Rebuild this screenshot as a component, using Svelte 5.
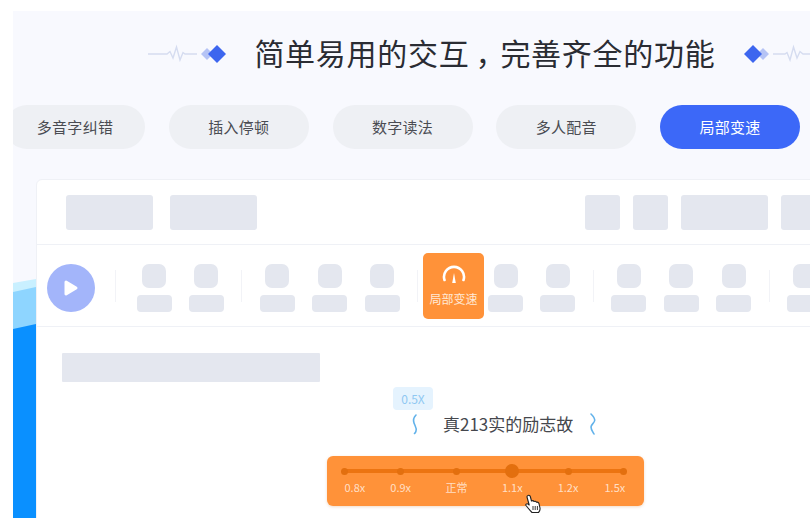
<script lang="ts">
	const tabs = ['多音字纠错', '插入停顿', '数字读法', '多人配音', '局部变速'];
	const groups = [2, 3, 3, 3, 1];
	const speeds = [
		{ label: '0.8x', cls: 'first' },
		{ label: '0.9x' },
		{ label: '正常' },
		{ label: '1.1x', active: true },
		{ label: '1.2x' },
		{ label: '1.5x', cls: 'last' }
	];
</script>

{#snippet ornament(flip: boolean)}
	<svg class="ornament" class:flip width="78" height="24" viewBox="0 0 78 24" fill="none">
		<path d="M0 12H19L22 9.500L25 16L28.500 5L32 18L35 10.500L37 12H49" stroke="#d5dcf0" stroke-width="1.400" />
		<path d="M59 6L65 12L59 18L53 12Z" fill="#b5c3f5" />
		<path d="M69 3L78 12L69 21L60 12Z" fill="#3d66ef" />
	</svg>
{/snippet}

<div class="page">
	<div class="panel">
		<svg class="wave" width="23" height="250" viewBox="0 0 23 250">
			<path d="M0 15L23 11V250H0Z" fill="#c9f0ff" />
			<path d="M0 24L23 19V250H0Z" fill="#8ed5ff" />
			<path d="M0 61L23 56V250H0Z" fill="#0a90ff" />
		</svg>

		<div class="title-row">
			{@render ornament(false)}
			<h1>简单易用的交互<span class="comma">，</span>完善齐全的功能</h1>
			{@render ornament(true)}
		</div>

		<div class="tabs">
			{#each tabs as tab, i}
				<div class="tab" class:active={i === tabs.length - 1}>{tab}</div>
			{/each}
		</div>

		<div class="card">
			<div class="toolbar">
				<div class="ph wide"></div>
				<div class="ph wide"></div>
				<div class="spacer"></div>
				<div class="ph small"></div>
				<div class="ph small"></div>
				<div class="ph wide"></div>
				<div class="ph small"></div>
			</div>

			<div class="tools">
				<div class="play">
					<svg width="16" height="18" viewBox="0 0 16 18">
						<path d="M3 3L13 9L3 15Z" fill="#fff" stroke="#fff" stroke-width="3" stroke-linejoin="round" />
					</svg>
				</div>
				{#each groups as count}
					<div class="sep"></div>
					<div class="group">
						{#each Array(count) as _}
							<div class="tool">
								<div class="ph icon"></div>
								<div class="ph name"></div>
							</div>
						{/each}
					</div>
				{/each}
				<div class="speed-badge">
					<svg width="24" height="22" viewBox="0 0 24 22" fill="none" stroke="#fff" stroke-width="2.600" stroke-linecap="round">
						<path d="M2.500 18A10 10 0 1 1 21.500 18" />
						<path d="M12 11L13.800 21H10.200Z" fill="#fff" stroke="none" />
					</svg>
					<span>局部变速</span>
				</div>
			</div>

			<div class="editor">
				<div class="ph line"></div>
				<div class="tip">0.5X</div>
				<div class="sentence">
					<svg width="8" height="24" viewBox="0 0 8 24" fill="none" stroke="#62b2ea" stroke-width="1.600" stroke-linecap="round">
						<path d="M5 3C3 5 2 8 3 11C4 14 6 16 5 19C4.800 20 4.300 21 3.500 21.500" />
					</svg>
					<span>真213实的励志故</span>
					<svg class="right" width="8" height="24" viewBox="0 0 8 24" fill="none" stroke="#62b2ea" stroke-width="1.600" stroke-linecap="round">
						<path d="M3 2C5 4 7 6 6.700 8.500C6.400 11 3 12.500 3 15C3 18 5 20 6 22" />
					</svg>
				</div>

				<div class="slider">
					<div class="scale">
						<div class="rail"></div>
						{#each speeds as s}
							<div class="stop">
								<div class="dot" class:active={s.active}></div>
							</div>
						{/each}
						{#each speeds as s}
							<div class="label {s.cls ?? ''}">{s.label}</div>
						{/each}
					</div>
					<svg class="hand" width="18" height="20" viewBox="0 0 18 20">
						<path d="M4 1.500C5 1 6 1.500 6.300 2.500L7.500 7C8.500 6.500 9.500 6.700 10 7.500C11 7 12 7.300 12.500 8.200C13.500 8 14.700 8.500 15 9.700L16 14C16.300 16 15.500 17.500 14.500 18.500H8C6.500 17 4 14 2 11.500C1.300 10.500 2.500 9.200 4 10L5.200 11L3 3C2.900 2.300 3.300 1.800 4 1.500Z" fill="#fff" stroke="#222" stroke-width="1.100" stroke-linejoin="round" />
						<path d="M9 12V16M11.200 12V16M13.400 12V16" stroke="#222" stroke-width="0.900" />
					</svg>
				</div>
			</div>
		</div>
	</div>
</div>

<style>
	:global(body) {
		margin: 0;
		background: #fff;
	}

	.page {
		width: 810px;
		height: 518px;
		padding: 11px 0 0 13px;
		box-sizing: border-box;
		overflow: hidden;
		font-family: "Noto Sans CJK SC", "Noto Sans", sans-serif;
	}

	.panel {
		position: relative;
		width: 944px;
		height: 507px;
		background: #f8f9fe;
		overflow: hidden;
	}

	.wave {
		position: absolute;
		left: 0;
		top: 257px;
	}

	.title-row {
		height: 84px;
		display: flex;
		align-items: center;
		justify-content: center;
		gap: 28px;
	}

	.ornament {
		flex-shrink: 0;
		margin-top: 2px;
	}

	.ornament.flip {
		transform: scaleX(-1);
	}

	h1 {
		margin: 0;
		font-size: 30px;
		font-weight: 400;
		letter-spacing: 0.750px;
		color: #2a2c33;
		line-height: 40px;
		white-space: nowrap;
		padding-bottom: 2px;
	}

	.comma {
		display: inline-block;
		width: 30.750px;
		text-align: center;
		letter-spacing: 0;
		font-feature-settings: "palt";
	}

	.tabs {
		display: flex;
		gap: 23.750px;
		margin: 10px 0 0 -8px;
	}

	.tab {
		width: 140px;
		height: 44px;
		flex-shrink: 0;
		border-radius: 22px;
		background: #eef0f4;
		color: #4a4c52;
		font-size: 15px;
		letter-spacing: 0.300px;
		line-height: 43px;
		text-align: center;
	}

	.tab.active {
		background: #3c68f8;
		color: #fff;
	}

	.card {
		margin: 30px 0 0 23px;
		height: 400px;
		background: #fff;
		border: 1px solid #eff1f6;
		border-radius: 6px;
		box-sizing: border-box;
	}

	.ph {
		background: #e4e7ef;
		border-radius: 3px;
		flex-shrink: 0;
	}

	.toolbar {
		height: 64px;
		display: flex;
		align-items: center;
		gap: 13px;
		padding: 0 0 0 29px;
		border-bottom: 1px solid #eff1f6;
	}

	.toolbar .ph {
		height: 35px;
	}

	.toolbar .wide {
		width: 87px;
	}

	.toolbar .wide + .wide {
		margin-left: 4px;
	}

	.toolbar .small {
		width: 35px;
	}

	.spacer {
		width: 302px;
		flex-shrink: 0;
	}

	.tools {
		position: relative;
		height: 82px;
		box-sizing: border-box;
		display: flex;
		align-items: center;
		border-bottom: 1px solid #eff1f6;
		padding: 4px 0 0 10px;
	}

	.play {
		width: 48px;
		height: 48px;
		border-radius: 50%;
		background: #a3b5fa;
		flex-shrink: 0;
		display: flex;
		align-items: center;
		justify-content: center;
		margin-right: 20px;
	}

	.sep {
		width: 1px;
		height: 32px;
		margin-top: -4px;
		background: #f2f3f7;
		flex-shrink: 0;
	}

	.group {
		display: flex;
		gap: 17.400px;
		padding: 0 17.500px;
	}

	.group:nth-of-type(3) {
		padding-left: 20.500px;
	}

	.tool {
		width: 35px;
		flex-shrink: 0;
		display: flex;
		flex-direction: column;
		align-items: center;
		gap: 7px;
	}

	.icon {
		width: 24px;
		height: 24px;
		border-radius: 7px;
	}

	.name {
		width: 35px;
		height: 17px;
		border-radius: 4px;
	}

	.speed-badge {
		position: absolute;
		left: 386px;
		top: 8px;
		width: 61px;
		height: 66px;
		border-radius: 5px;
		background: #ff9239;
		color: #fff;
		display: flex;
		flex-direction: column;
		align-items: center;
		padding-top: 9px;
		box-sizing: border-box;
	}

	.speed-badge span {
		font-size: 12px;
		line-height: 16px;
		margin-top: 7px;
		color: #ffe9d6;
		white-space: nowrap;
	}

	.editor {
		position: relative;
		padding: 26px 0 0 25px;
	}

	.line {
		width: 258px;
		height: 29px;
		border-radius: 1px;
	}

	.tip {
		width: 40px;
		height: 23px;
		margin: 5px 0 0 331px;
		border-radius: 4px;
		background: #e5f3fe;
		color: #8fc8f2;
		font-size: 12px;
		line-height: 23px;
		text-align: center;
	}

	.sentence {
		display: flex;
		align-items: center;
		height: 26px;
		margin: 1px 0 0 349px;
		gap: 24px;
		color: #45474d;
		white-space: nowrap;
	}

	.sentence span {
		width: 130px;
		flex-shrink: 0;
		font-size: 17px;
		line-height: 26px;
	}

	.sentence svg {
		flex-shrink: 0;
	}

	.sentence .right {
		margin-left: -9px;
	}

	.slider {
		position: relative;
		width: 317px;
		height: 50px;
		margin: 19px 0 0 265px;
		border-radius: 6px;
		background: #ff9239;
		box-shadow: 0 1px 3px rgba(200, 110, 30, 0.25);
	}

	.scale {
		position: relative;
		display: grid;
		grid-template-columns: repeat(6, 55.800px);
		margin-left: -10px;
		padding-top: 8px;
	}

	.rail {
		position: absolute;
		left: 28px;
		width: 279px;
		top: 13px;
		height: 4px;
		background: #ec7411;
	}

	.stop {
		height: 14px;
		display: flex;
		align-items: center;
		justify-content: center;
		position: relative;
	}

	.dot {
		width: 7px;
		height: 7px;
		border-radius: 50%;
		background: #e36f0e;
	}

	.dot.active {
		width: 14px;
		height: 14px;
	}

	.label {
		margin-top: 1px;
		font-size: 11px;
		line-height: 16px;
		text-align: center;
		color: rgba(255, 255, 255, 0.72);
	}

	.label.first {
		padding-left: 20px;
	}

	.label.last {
		padding-right: 18px;
	}

	.hand {
		position: absolute;
		left: 197px;
		top: 38px;
	}
</style>
